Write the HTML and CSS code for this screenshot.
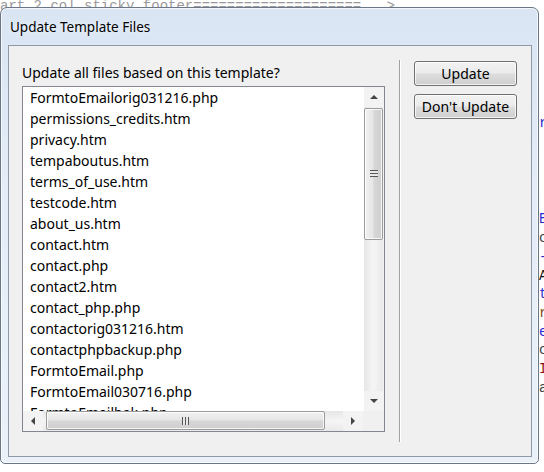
FILE: index.html
```html
<!DOCTYPE html>
<html>
<head>
<meta charset="utf-8">
<link rel="stylesheet" href="styles.css">
</head>
<body>
<div class="code">
  <div class="code-top">art 2 col sticky footer====================   &gt;</div>
  <div class="code-right">
    <div class="c-r c-blue">r</div>
    <div class="c-group">
      <div class="c-blue">E</div>
      <div class="c-dark">c</div>
      <div class="c-blue">-</div>
      <div class="c-black">A</div>
      <div class="c-blue">t</div>
      <div class="c-brown">r</div>
      <div class="c-blue">e</div>
      <div class="c-dark">c</div>
      <div class="c-red">I</div>
      <div class="c-dark">a</div>
    </div>
  </div>
</div>

<div class="window">
  <div class="titlebar">Update Template Files</div>
  <div class="client">
    <div class="left">
      <div class="label">Update all files based on this template?</div>
      <div class="listbox">
        <div class="list-main">
          <div class="items">
            <div class="item">FormtoEmailorig031216.php</div>
            <div class="item">permissions_credits.htm</div>
            <div class="item">privacy.htm</div>
            <div class="item">tempaboutus.htm</div>
            <div class="item">terms_of_use.htm</div>
            <div class="item">testcode.htm</div>
            <div class="item">about_us.htm</div>
            <div class="item">contact.htm</div>
            <div class="item">contact.php</div>
            <div class="item">contact2.htm</div>
            <div class="item">contact_php.php</div>
            <div class="item">contactorig031216.htm</div>
            <div class="item">contactphpbackup.php</div>
            <div class="item">FormtoEmail.php</div>
            <div class="item">FormtoEmail030716.php</div>
            <div class="item">FormtoEmailbak.php</div>
          </div>
          <div class="vscroll">
            <div class="sb-btn"><span class="arr arr-up"></span></div>
            <div class="vtrack">
              <div class="vthumb"><span class="vgrip"></span></div>
            </div>
            <div class="sb-btn"><span class="arr arr-down"></span></div>
          </div>
        </div>
        <div class="list-bottom">
          <div class="hscroll">
            <div class="sb-btn h"><span class="arr arr-left"></span></div>
            <div class="htrack">
              <div class="hthumb"><span class="hgrip"></span></div>
            </div>
            <div class="sb-btn h"><span class="arr arr-right"></span></div>
          </div>
          <div class="corner"></div>
        </div>
      </div>
    </div>
    <div class="separator"></div>
    <div class="right">
      <button class="btn">Update</button>
      <button class="btn">Don't Update</button>
    </div>
  </div>
</div>
</body>
</html>
```

FILE: styles.css
```css
* { box-sizing: border-box; }
html, body {
  margin: 0;
  padding: 0;
}
body {
  width: 544px;
  height: 472px;
  overflow: hidden;
  background: #ffffff;
  position: relative;
  font-family: "Noto Sans", "Open Sans", sans-serif;
}

/* background editor text */
.code {
  font-family: "Liberation Mono", monospace;
  font-size: 14px;
  line-height: 18.7px;
}
.code-top {
  color: #9a9a9a;
  margin-top: -3px;
  white-space: pre;
}
.code-right {
  margin-left: 539px;
  margin-top: 98px;
}
.c-group { margin-top: 78px; }
.c-blue { color: #2b2bd0; }
.c-dark { color: #444444; }
.c-black { color: #111111; }
.c-brown { color: #7a4a10; }
.c-red { color: #8a1010; }

/* window */
.window {
  position: absolute;
  left: 0;
  top: 7px;
  width: 539px;
  height: 457px;
  border: 1px solid #6b7787;
  border-radius: 7px 7px 5px 5px;
  background: linear-gradient(180deg, #d9e5f3 0%, #e4edf8 40%, #eaf1f9 100%);
  box-shadow: inset 0 0 0 1px rgba(255,255,255,0.7);
  display: flex;
  flex-direction: column;
  padding: 0 6px 6px 7px;
}
.titlebar {
  height: 37px;
  padding: 9px 0 0 2px;
  font-size: 13.5px;
  line-height: 20px;
  color: #000;
  text-shadow: 0 0 6px rgba(255,255,255,0.9);
}
.client {
  flex: 1;
  border: 1px solid #8f9aa8;
  background: #f0f0f0;
  display: flex;
  align-items: flex-start;
}
.left {
  padding: 18px 0 0 13px;
}
.label {
  font-size: 14px;
  line-height: 18px;
  margin-bottom: 4px;
  color: #000;
  white-space: nowrap;
}
.listbox {
  width: 363px;
  height: 346px;
  border: 1px solid #828790;
  background: #ffffff;
  display: flex;
  flex-direction: column;
}
.list-main {
  flex: 1;
  display: flex;
  overflow: hidden;
}
.items {
  flex: 1;
  padding: 0 0 0 7px;
  overflow: hidden;
}
.item {
  height: 21px;
  line-height: 21px;
  font-size: 14px;
  color: #000;
  white-space: nowrap;
}
.vscroll {
  width: 20px;
  display: flex;
  flex-direction: column;
  background: #f3f3f3;
  padding-right: 1px;
}
.sb-btn {
  height: 20px;
  display: flex;
  align-items: center;
  justify-content: center;
}
.sb-btn.h { width: 20px; height: auto; }
.vtrack {
  flex: 1;
  background: linear-gradient(90deg, #e6e6e6, #f5f5f5 50%, #e9e9e9);
  padding-top: 1px;
}
.vthumb {
  height: 132px;
  border: 1px solid #9b9b9b;
  border-radius: 2px;
  background: linear-gradient(90deg, #f2f2f2 0%, #e6e6e6 45%, #d6d6d6 55%, #cfcfcf 100%);
  box-shadow: inset 0 0 0 1px rgba(255,255,255,0.8);
  display: flex;
  align-items: flex-end;
  justify-content: center;
  padding-bottom: 62px;
}
.vgrip {
  width: 8px;
  height: 7px;
  background: repeating-linear-gradient(180deg, #555 0 1px, #e8e8e8 1px 3px);
}
.list-bottom {
  height: 20px;
  display: flex;
}
.hscroll {
  flex: 1;
  display: flex;
  background: #f3f3f3;
}
.htrack {
  flex: 1;
  padding: 0 18px 0 3px;
  background: linear-gradient(180deg, #e6e6e6, #f5f5f5 50%, #e9e9e9);
}
.hthumb {
  height: 19px;
  border: 1px solid #9b9b9b;
  border-radius: 2px;
  background: linear-gradient(180deg, #f2f2f2 0%, #e6e6e6 45%, #d6d6d6 55%, #cfcfcf 100%);
  box-shadow: inset 0 0 0 1px rgba(255,255,255,0.8);
  display: flex;
  align-items: center;
  justify-content: center;
}
.hgrip {
  width: 7px;
  height: 8px;
  background: repeating-linear-gradient(90deg, #555 0 1px, #e8e8e8 1px 3px);
}
.corner {
  width: 21px;
  background: #f0f0f0;
}
.arr {
  width: 0;
  height: 0;
  border: 4px solid transparent;
}
.arr-up { border-bottom: 4px solid #444; border-top-width: 0; }
.arr-down { border-top: 4px solid #444; border-bottom-width: 0; }
.arr-left { border-right: 4px solid #444; border-left-width: 0; }
.arr-right { border-left: 4px solid #444; border-right-width: 0; }

.separator {
  width: 2px;
  height: 382px;
  margin: 14px 0 0 14px;
  border-left: 1px solid #a0a0a0;
  border-right: 1px solid #ffffff;
}
.right {
  padding: 15px 0 0 13px;
  display: flex;
  flex-direction: column;
  gap: 8px;
}
.btn {
  width: 103px;
  height: 25px;
  border: 1px solid #707070;
  border-radius: 3px;
  background: linear-gradient(180deg, #f2f2f2 0%, #ebebeb 48%, #dddddd 52%, #cfcfcf 100%);
  box-shadow: inset 0 0 0 1px rgba(255,255,255,0.75);
  font-family: "Noto Sans", "Open Sans", sans-serif;
  font-size: 14px;
  line-height: 21px;
  color: #000;
  padding: 0;
  text-align: center;
}
```
